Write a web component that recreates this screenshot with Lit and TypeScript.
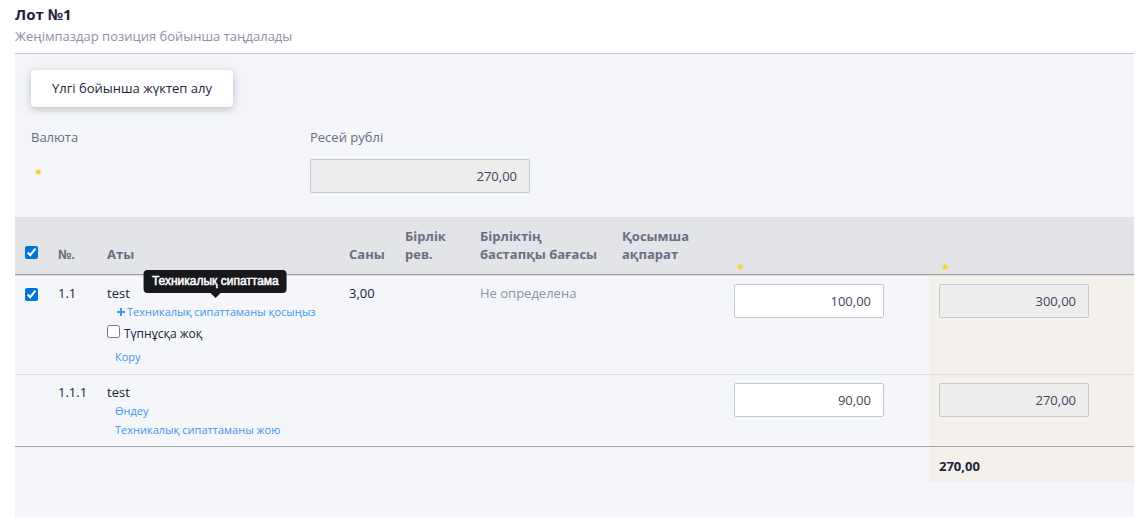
import { LitElement, html, css, nothing } from "lit";
import { customElement, state } from "lit/decorators.js";

interface LotRow {
  id: string;
  name: string;
  count: string;
  startPrice: string;
  price: string;
  total: string;
  selectable: boolean;
}

@customElement("app-root")
export class AppRoot extends LitElement {
  static styles = css`
    :host {
      display: flex;
      flex-direction: column;
      box-sizing: border-box;
      min-height: 100vh;
      padding: 4px 9px 0 15px;
      background: #fff;
      color: #1a2439;
      font: 13px/18px "Open Sans", "Noto Sans", sans-serif;
    }
    h1 {
      margin: 0;
      font-size: 15px;
      line-height: 20px;
      font-weight: 700;
    }
    .subtitle {
      margin: 0;
      padding: 3px 0 8px;
      color: #8b91a7;
      border-bottom: 1px solid #c3c8d5;
    }
    .panel {
      flex: 1;
      background: #f4f6fa;
    }
    .summary {
      padding: 16px 16px 24px;
    }
    .template {
      display: block;
      height: 37px;
      padding: 0 21px 2px;
      border: 0;
      border-radius: 4px;
      background: #fff;
      box-shadow: 0 2px 8px rgba(30, 35, 50, 0.28);
      color: #1a2439;
      font: inherit;
    }
    .currency {
      display: grid;
      grid-template-columns: 279px 220px;
      row-gap: 13px;
      margin-top: 21px;
      color: #686c80;
    }
    .required {
      color: #ffcc12;
      font-weight: 700;
    }
    .currency .required {
      padding: 6px 4px;
    }
    .amount {
      box-sizing: border-box;
      display: block;
      width: 100%;
      height: 34px;
      padding: 0 12px;
      border: 1px solid #c3c8d5;
      border-radius: 2px;
      background: #fff;
      color: #41455a;
      font: inherit;
      text-align: right;
    }
    .amount[readonly] {
      background: #ededed;
    }
    td .amount {
      width: 150px;
    }
    table {
      width: 100%;
      table-layout: fixed;
      border-collapse: separate;
      border-spacing: 0;
    }
    .c-check { width: 33px; }
    .c-num { width: 49px; }
    .c-count { width: 56px; }
    .c-unit { width: 75px; }
    .c-start { width: 142px; }
    .c-info { width: 112px; }
    .c-price { width: 205px; }
    th {
      padding: 10px 0 11px 10px;
      background: #e2e4e8;
      border-bottom: 1px solid #999ca1;
      color: #6c6f83;
      font-weight: 700;
      text-align: left;
      vertical-align: bottom;
    }
    th.start {
      padding-right: 10px;
    }
    th.mark {
      padding: 0 0 0 13px;
      line-height: 10px;
    }
    td {
      padding: 8px 0 8px 10px;
      border-bottom: 1px solid #dcdee0;
      vertical-align: top;
    }
    tbody tr:first-child td {
      border-top: 1px solid #dcdee0;
    }
    tbody tr:last-child td {
      padding-bottom: 7px;
      border-bottom-color: #a5a8ac;
    }
    tfoot td {
      border-bottom: 0;
      padding: 10px 0 7px 10px;
      font-weight: 700;
    }
    .total {
      background: #f4f1ed;
    }
    .muted {
      color: #8b91a7;
    }
    input[type="checkbox"] {
      display: block;
      flex: none;
      width: 13px;
      height: 13px;
      margin: 4px 0;
      accent-color: #0075d8;
    }
    .links {
      display: flex;
      flex-direction: column;
      align-items: flex-start;
      padding-left: 8px;
      font-size: 11px;
      line-height: 19px;
    }
    .link {
      position: relative;
      color: #3f96f0;
      text-decoration: none;
      white-space: nowrap;
    }
    .plus {
      width: 8px;
      height: 8px;
      margin: 0 2px;
    }
    .tip {
      position: absolute;
      z-index: 1;
      bottom: 100%;
      left: 50%;
      margin-bottom: 9px;
      transform: translateX(-50%);
      padding: 3px 8px 4px;
      border-radius: 4px;
      background: #16181b;
      color: #fff;
      font: 400 12px/16px "Liberation Sans", Arial, sans-serif;
      -webkit-text-stroke: 0.5px #fff;
    }
    .tip::after {
      content: "";
      position: absolute;
      top: 100%;
      left: 50%;
      margin-left: -5px;
      border: 5px solid transparent;
      border-top-color: #16181b;
      border-bottom: 0;
    }
    .check {
      display: flex;
      gap: 4px;
      padding: 2px 0;
      font-size: 12px;
      line-height: 22px;
    }
    .check input[type="checkbox"] {
      margin: 2px 0;
    }
  `;

  @state() private rows: LotRow[] = [
    { id: "1.1", name: "test", count: "3,00", startPrice: "Не определена", price: "100,00", total: "300,00", selectable: true },
    { id: "1.1.1", name: "test", count: "", startPrice: "", price: "90,00", total: "270,00", selectable: false },
  ];

  private renderActions(row: LotRow) {
    if (!row.selectable) {
      return html`
        <div class="links">
          <a class="link" href="#edit">Өндеу</a>
          <a class="link" href="#remove">Техникалық сипаттаманы жою</a>
        </div>
      `;
    }
    return html`
      <div class="links">
        <a class="link" href="#add" aria-describedby="tip"
          ><svg class="plus" viewBox="0 0 8 8" aria-hidden="true"><path d="M4 0v8M0 4h8" stroke="currentColor" stroke-width="2" /></svg
          >Техникалық сипаттаманы қосыңыз<span class="tip" id="tip" role="tooltip">Техникалық сипаттама</span></a>
      </div>
      <label class="check"><input type="checkbox" />Түпнұсқа жоқ</label>
      <div class="links"><a class="link" href="#view">Кору</a></div>
    `;
  }

  render() {
    return html`
      <h1>Лот №1</h1>
      <p class="subtitle">Жеңімпаздар позиция бойынша таңдалады</p>
      <main class="panel">
        <section class="summary">
          <button class="template" type="button">Үлгі бойынша жүктеп алу</button>
          <div class="currency">
            <span>Валюта</span>
            <label for="sum">Ресей рублі</label>
            <span class="required">*</span>
            <input class="amount" id="sum" readonly .value=${"270,00"} />
          </div>
        </section>
        <table>
          <colgroup>
            <col class="c-check" /><col class="c-num" /><col /><col class="c-count" /><col class="c-unit" />
            <col class="c-start" /><col class="c-info" /><col class="c-price" /><col class="c-price" />
          </colgroup>
          <thead>
            <tr>
              <th><input type="checkbox" checked aria-label="Лот №1" /></th>
              <th>№.</th>
              <th>Аты</th>
              <th>Саны</th>
              <th>Бірлік рев.</th>
              <th class="start">Бірліктің бастапқы бағасы</th>
              <th>Қосымша ақпарат</th>
              <th class="mark"><span class="required">*</span></th>
              <th class="mark"><span class="required">*</span></th>
            </tr>
          </thead>
          <tbody>
            ${this.rows.map(
              (row) => html`
                <tr>
                  <td>${row.selectable ? html`<input type="checkbox" checked aria-label=${row.id} />` : nothing}</td>
                  <td>${row.id}</td>
                  <td>${row.name}${this.renderActions(row)}</td>
                  <td>${row.count}</td>
                  <td></td>
                  <td class="muted">${row.startPrice}</td>
                  <td></td>
                  <td><input class="amount" aria-label=${row.id} .value=${row.price} /></td>
                  <td class="total"><input class="amount" readonly aria-label=${row.id} .value=${row.total} /></td>
                </tr>
              `
            )}
          </tbody>
          <tfoot>
            <tr>
              <td colspan="8"></td>
              <td class="total">270,00</td>
            </tr>
          </tfoot>
        </table>
      </main>
    `;
  }
}
